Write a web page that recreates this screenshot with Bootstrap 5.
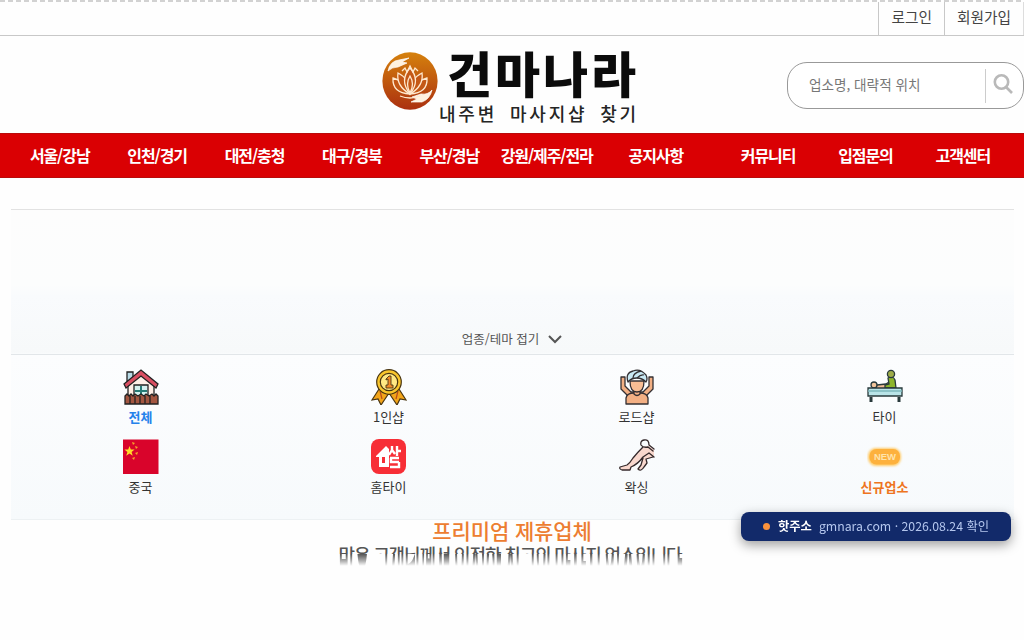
<!DOCTYPE html>
<html lang="ko">
<head>
<meta charset="utf-8">
<meta name="viewport" content="width=device-width, initial-scale=1">
<title>건마나라</title>
<link href="https://cdn.jsdelivr.net/npm/bootstrap@5.3.0/dist/css/bootstrap.min.css" rel="stylesheet">
<style>
body{font-family:"Noto Sans CJK KR",sans-serif;color:#444;background:#fefefe;height:640px;overflow:hidden}
a{color:inherit;text-decoration:none}
.util-bar{height:36px;border-bottom:1px solid #c8c8c8;position:relative;font-size:14.7px;line-height:34px}
.util-bar::before{content:"";position:absolute;left:0;right:0;top:0;height:2px;background:repeating-linear-gradient(90deg,#d2d2d2 0 5px,#fff 5px 8px)}
.util-bar a{border-left:1px solid #c8c8c8;padding:0 12px;height:35px}
.util-bar a:last-child{border-right:1px solid #ddd}
.brand-row{height:97px;position:relative}
.brand-link{width:256px;margin-left:382px;padding-top:12px;height:97px}
.brand-name{font-size:49px;font-weight:900;line-height:47px;color:#0b0b0b;white-space:nowrap;height:56px;letter-spacing:2.9px}
.brand-sub{font-size:18px;font-weight:500;line-height:18px;letter-spacing:2.8px;word-spacing:5px;color:#252525;white-space:nowrap;margin-left:1px}
.search-box{width:237px;height:47px;border:1px solid #999;border-radius:20px;margin-top:26px;font-size:13.6px;color:#777;padding-left:21px;background:#fff}
.search-btn{border-left:1px solid #ccc;height:34px;width:38px}
.main-nav{height:45px;background:#da0003;border-top:1px solid #b90b0b;border-bottom:1px solid #b90b0b;padding:0 12px 0 11px;color:#fff;font-size:16px;font-weight:700;letter-spacing:-1.1px;white-space:nowrap}
.main-nav a{width:97.4px;text-align:center;line-height:42px}
.main-nav .notice-item{width:124px;padding-right:3px}
.theme-panel{margin:31px 10px 0 11px;height:311px;border-top:1px solid #e2e2e2;border-bottom:1px solid #edf1f3;background:linear-gradient(#fdfdfd 0,#fcfdfd 24%,#f9fbfd 28%,#f7f9fa 46%,#fcfdfe 47%,#f7fafc 100%)}
.theme-toggle{height:145px;border-bottom:1px solid #e2e6e9;font-size:12.5px;color:#555;padding-bottom:5px}
.theme-grid{padding:14px 5.5px 0}
.theme-item{height:69.5px;font-size:13px;line-height:20px;color:#333}
.theme-item svg{width:36px;height:36px;display:block;margin-bottom:2px}
.premium{font-size:21px;line-height:21px;height:24px;color:#ed7d31;font-weight:500;text-align:center;letter-spacing:-.1px}
.smear-wrap{position:relative;height:27px;margin-top:-2px;margin-right:4px;text-align:center;font-size:18px;line-height:24px;color:#555;letter-spacing:-1.15px;white-space:nowrap;font-weight:500}
.smear-wrap span{display:block;clip-path:inset(0 0 12px 0)}
.smear-strip{position:absolute;left:0;right:0;top:12px;height:14px;overflow:hidden;-webkit-mask-image:linear-gradient(#000,rgba(0,0,0,.45) 50%,transparent 85%)}
.smear-strip::before{content:attr(data-line);position:absolute;left:0;right:0;top:-154px;transform-origin:0 0;transform:scaleY(14)}
.hot-link{right:13px;top:512px;width:270px;height:29px;background:#122a6a;border-radius:8px;box-shadow:0 4px 12px rgba(0,0,0,.38);font-size:12.3px;line-height:27px;color:#b5c7ee;white-space:nowrap}
.hot-link i{width:7px;height:7px;border-radius:50%;background:#fb923c;margin-right:8px}
.hot-link b{color:#fff;margin-right:7px}
</style>
</head>
<body>
<div class="util-bar d-flex justify-content-end"><a href="#">로그인</a><a href="#">회원가입</a></div>
<header class="brand-row d-flex justify-content-between">
 <a href="#" class="brand-link d-flex">
  <svg width="56" height="60" viewBox="0 0 56 60" class="flex-shrink-0" style="margin-top:3px">
   <defs><linearGradient id="orb" x1="0" y1="0" x2="0" y2="1"><stop stop-color="#d5810d"/><stop offset="1" stop-color="#ab3010"/></linearGradient></defs>
   <ellipse cx="28" cy="30" rx="27.6" ry="28.7" fill="url(#orb)"/>
   <path d="M6 20Q8 10 17 9L27 7 20 11 25 12 16 16Q10 16 6 20ZM50 39Q48 48 40 51L29 51 35 48 30 46 39 43Q46 44 50 39Z" fill="#fff2df" stroke="#fff" stroke-width=".7"/>
   <g fill="#c45816" stroke="#ffe9cf" stroke-width="1.3"><path d="M28 43Q10 42 11 27Q23 30 28 43Q33 30 45 27Q46 42 28 43Z"/><path d="M28 43Q14 35 16 22Q27 27 28 43Q29 27 40 22Q42 35 28 43Z"/><path d="M28 43Q17 29 28 17Q39 29 28 43Z"/><path d="M28 42Q23 33 28 25Q33 33 28 42M20 20l3-3 2 4 3-6 3 6 2-4 3 3M18 45q10 4 20 0" fill="none"/></g>
  </svg>
  <div class="d-flex flex-column"><div class="brand-name" style="margin-left:9px">건마나라</div><div class="brand-sub">내주변 마사지샵 찾기</div></div>
 </a>
 <div class="search-box d-flex align-items-center justify-content-between"><span style="margin-top:-2px">업소명, 대략적 위치</span><span class="search-btn d-flex align-items-center"><svg width="22" height="24" viewBox="0 0 22 24" style="margin-left:7px;margin-top:-4px" fill="none" stroke="#b9b9b9" stroke-width="2.6"><circle cx="8.5" cy="10" r="6.7"/><path d="M13 15l6 6"/></svg></span></div>
</header>
<nav class="main-nav d-flex">
 <a href="#">서울/강남</a><a href="#">인천/경기</a><a href="#">대전/충청</a><a href="#">대구/경북</a><a href="#">부산/경남</a><a href="#">강원/제주/전라</a><a href="#" class="notice-item">공지사항</a><a href="#">커뮤니티</a><a href="#">입점문의</a><a href="#">고객센터</a>
</nav>
<section class="theme-panel">
 <div class="theme-toggle d-flex justify-content-center align-items-end"><span>업종/테마 접기</span><svg width="14" height="9" viewBox="0 0 14 9" style="margin:0 1px 5px 9px" fill="none" stroke="#555" stroke-width="2"><path d="M1 1l6 6 6-6"/></svg></div>
 <div class="theme-grid row row-cols-4 g-0">
  <div class="col theme-item d-flex flex-column align-items-center fw-bold" style="color:#2582eb">
   <svg viewBox="0 0 36 36" stroke="#222" stroke-width="1.3"><path d="M4 3h6v9H4z" fill="#b9dbe7"/><path d="M5 15L18 5l13 10v17H5z" fill="#fff0e7"/><path d="M1 15L18 1l17 14-2 4L18 7 3 19z" fill="#d94f62"/><path d="M11 16h14v12H11z" fill="#d5f1ef"/><path d="M18 17v11M12 22h12" stroke="#267c76" stroke-width="2"/><path d="M2 27l2-2 2 2 2-2 2 2 2-2 3 2 3-2 3 2 2-2 3 2 3-2 2 2 2-2 2 2v8H2z" fill="#a35640"/><path d="M7 27v8M12 27v8M17 27v8M22 27v8M27 27v8"/></svg>전체</div>
  <div class="col theme-item d-flex flex-column align-items-center">
   <svg viewBox="0 0 36 36" stroke="#493512" stroke-width="1.2"><path d="M8 20L1 31l6-1 3 6 8-12 8 12 3-6 6 1-7-11z" fill="#f3a51a"/><path d="M9 22l2 8M27 22l-2 8" stroke="#b84c1c"/><circle cx="18" cy="13" r="12.3" fill="#fac62c"/><circle cx="18" cy="13" r="8.7" fill="#ffe883"/><path d="M15 10l3-3h2v9h2v3h-7v-3h2v-6l-2 1z" fill="#f28b29" stroke-width=".9"/></svg>1인샵</div>
  <div class="col theme-item d-flex flex-column align-items-center">
   <svg viewBox="0 0 36 36" stroke="#343033" stroke-width="1.3" stroke-linejoin="round"><path d="M2 8v12l9 9h14l9-9V8h-4v9l-6 6H12l-6-6V8z" fill="#f3b084"/><path d="M7 35v-6q1-5 8-5h6q7 0 8 5v6z" fill="#f3b084"/><path d="M15 20v5q3 3 6 0v-5" fill="#f3b084"/><path d="M11 12q0 11 7 11t7-11z" fill="#f8bd94"/><path d="M9 13Q6 4 14 2Q21-1 27 6Q29 10 27 13Q23 9 18 9Q12 9 9 13Z" fill="#c9e9f4"/><path d="M14 9Q14 4 22 2M18 9Q22 5 25 6" fill="none"/></svg>로드샵</div>
  <div class="col theme-item d-flex flex-column align-items-center">
   <svg viewBox="0 0 36 36" stroke="#28393b" stroke-width="1.3"><path d="M10 16l9-1 3-2 1 4-5 3H8z" fill="#f1bc94"/><path d="M21 9q5-3 7 2l1 8H18v-3l4-1z" fill="#8db52c"/><circle cx="24" cy="5" r="3.6" fill="#9eab49"/><circle cx="7" cy="16" r="3" fill="#f2c49b"/><path d="M1 19h34v8H1z" fill="#b9e4e8"/><path d="M1 22h34" stroke="#7eb8bc"/><path d="M4 28v5M32 28v5" stroke-width="3"/></svg>타이</div>
  <div class="col theme-item d-flex flex-column align-items-center">
   <svg viewBox="0 0 36 36"><path fill="#d9042b" d="M0 .5h35.5V35H0z"/><path fill="#ffda28" d="M6.5 7l1.3 3.6h3.8l-3 2.4 1.1 3.7-3.2-2.3-3.3 2.3 1.2-3.7-3-2.4h3.8z"/><path fill="#f7a329" d="M9 3l3 1-2 2zM12 7l3 1-2 2zM12 14l3-1-1 3zM9 19l3-1-1 3z"/></svg>중국</div>
  <div class="col theme-item d-flex flex-column align-items-center">
   <svg viewBox="0 0 36 36"><rect width="35" height="35" rx="8" fill="#f72e36"/><path d="M5 17L15 7l3 3v18H8V18H5z" fill="#fff"/><path d="M21 7v4l-3 5M21 11l3 4M26 7v10M26 12h4M19 19h9M20 19v4h8M28 23v5h-9" fill="none" stroke="#fff" stroke-width="2.4"/><path d="M11 18h3v6h-3z" fill="#f72e36"/></svg>홈타이</div>
  <div class="col theme-item d-flex flex-column align-items-center">
   <svg viewBox="0 0 36 36" fill="none" stroke="#34292b" stroke-width="1.3" stroke-linejoin="round" stroke-linecap="round"><path d="M24 8L30 7 35 11V18L27 20 28 24 23 30 19 30 22 26 24 18 12 28 11 31H3L1 28 8 26 14 19Z" fill="#f8d7cd" stroke="none"/><path d="M34 12L29 8Q24 9 22 6Q21 2 25 1Q30 0 30 6L35 10M24 8Q19 13 14 19Q11 24 8 26L1 28Q0 30 3 31H11L12 28Q19 25 24 18L30 14L35 18M24 19L22 26 19 30Q22 33 25 28L28 24 27 20 34 18"/></svg>왁싱</div>
  <div class="col theme-item d-flex flex-column align-items-center fw-bold" style="color:#ee7421">
   <svg viewBox="0 0 36 36"><defs><filter id="soft"><feGaussianBlur stdDeviation="1.2"/></filter></defs><rect x="1" y="9" width="33" height="18" rx="8" fill="#ffcb68" filter="url(#soft)"/><rect x="2.5" y="10" width="30.5" height="15.5" rx="7" fill="#fdb13d"/><text x="18" y="21" text-anchor="middle" font-family="Liberation Sans" font-size="9.5" font-weight="bold" fill="#ffe4ac">NEW</text></svg>신규업소</div>
 </div>
</section>
<section>
 <h2 class="premium m-0">프리미엄 제휴업체</h2>
 <div class="smear-wrap"><span>많은 고객님께서 인정한 최고의 마사지 업소입니다</span><div class="smear-strip" data-line="많은 고객님께서 인정한 최고의 마사지 업소입니다"></div></div>
</section>
<a href="#" class="hot-link position-fixed d-flex align-items-center justify-content-center"><i></i><b>핫주소</b><span>gmnara.com · 2026.08.24 확인</span></a>
<script src="https://cdn.jsdelivr.net/npm/bootstrap@5.3.0/dist/js/bootstrap.bundle.min.js"></script>
</body>
</html>
